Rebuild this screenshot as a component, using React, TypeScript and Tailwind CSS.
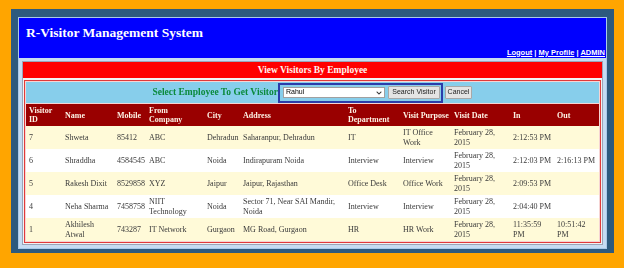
import { FaChevronDown } from "react-icons/fa";

const cols = [
  { label: "Visitor\nID", w: "w-[36px]" },
  { label: "Name", w: "w-[52px]" },
  { label: "Mobile", w: "w-[32px]" },
  { label: "From\nCompany", w: "w-[58px]" },
  { label: "City", w: "w-[36px]" },
  { label: "Address", w: "w-[105px]" },
  { label: "To\nDepartment", w: "w-[55px]" },
  { label: "Visit Purpose", w: "w-[51px]" },
  { label: "Visit Date", w: "w-[59px]" },
  { label: "In", w: "w-[44px]" },
  { label: "Out", w: "w-[45px]" },
];

const rows = [
  ["7", "Shweta", "85412", "ABC", "Dehradun", "Saharanpur, Dehradun", "IT", "IT Office\nWork", "February 28,\n2015", "2:12:53 PM", ""],
  ["6", "Shraddha", "4584545", "ABC", "Noida", "Indirapuram Noida", "Interview", "Interview", "February 28,\n2015", "2:12:03 PM", "2:16:13 PM"],
  ["5", "Rakesh Dixit", "8529858", "XYZ", "Jaipur", "Jaipur, Rajasthan", "Office Desk", "Office Work", "February 28,\n2015", "2:09:53 PM", ""],
  ["4", "Neha Sharma", "7458758", "NIIT\nTechnology", "Noida", "Sector 71, Near SAI Mandir,\nNoida", "Interview", "Interview", "February 28,\n2015", "2:04:40 PM", ""],
  ["1", "Akhilesh\nAtwal", "743287", "IT Network", "Gurgaon", "MG Road, Gurgaon", "HR", "HR Work", "February 28,\n2015", "11:35:59\nPM", "10:51:42\nPM"],
];

export default function App() {
  return (
    <div className="w-[624px] h-[268px] overflow-hidden bg-[#ffa500] pt-[9px] pl-[11px] font-['Liberation_Serif',serif]">
      <div className="w-[603px] bg-[#2d5a7e] pt-2 px-[7px] pb-[4px]">
        <div className="border border-[#a9c9ea] bg-[#c6dcf2]">
          {/* header */}
          <div className="h-[40px] bg-[#0000ff] flex flex-col justify-between pl-[7px] pr-px pt-[8px] pb-[2px]">
            <div className="text-white font-bold text-[13.5px] leading-none">
              R-Visitor Management System
            </div>
            <div className="self-end text-white font-bold text-[7.5px] leading-none font-['Liberation_Sans',sans-serif]">
              <span className="underline">Logout</span> |{" "}
              <span className="underline">My Profile</span> |{" "}
              <span className="underline">ADMIN</span>
            </div>
          </div>

          <div className="mx-[3px] mt-[3px] mb-[3px] border border-[#9aa4b8] bg-[#f2f2f2]">
            <div className="h-[16px] bg-[#ff0000] flex items-center justify-center text-[#fff4f0] font-bold text-[9.5px]">
              View Visitors By Employee
            </div>
            <div className="mt-[2px] mx-px mb-px border border-[#e03a3a] p-px bg-[#f6d4d4] will-change-transform">
              {/* search row */}
              <div className="h-[21px] bg-[#87ceeb] flex items-center mb-px">
                <div className="w-[252px] shrink-0 flex justify-end">
                  <span className="whitespace-nowrap text-[#0b8a3c] font-bold text-[9.5px] leading-none">
                    Select Employee To Get Visitor
                  </span>
                </div>
                <div className="h-[20px] w-[165px] border-2 border-[#2b3caa] flex items-center pl-[3px] gap-[3px] font-['Liberation_Sans',sans-serif]">
                  <div className="w-[102px] h-[11px] bg-white border border-[#a0a0a0] flex items-center justify-between px-[2px] text-[7px] text-black">
                    <span>Rahul</span>
                    <FaChevronDown className="text-[6px] text-[#333]" />
                  </div>
                  <div className="w-[52px] h-[13px] bg-[#e4e4e4] border border-[#a8a8a8] rounded-[1px] flex items-center justify-center text-[7px] text-[#222]">
                    Search Visitor
                  </div>
                </div>
                <div className="ml-[2px] w-[27px] h-[13px] bg-[#e4e4e4] border border-[#a8a8a8] rounded-[1px] flex items-center justify-center text-[7px] text-[#222] font-['Liberation_Sans',sans-serif]">
                  Cancel
                </div>
              </div>

              {/* table */}
              <table className="w-[573px] table-fixed border-collapse">
                <thead>
                  <tr className="h-[22px] bg-[#990000]">
                    {cols.map((c) => (
                      <th
                        key={c.label}
                        className={`${c.w} p-0 pl-[3px] text-left align-middle whitespace-pre-line text-[8px] leading-[9px] font-bold text-[#fdf1e4]`}
                      >
                        {c.label}
                      </th>
                    ))}
                  </tr>
                </thead>
                <tbody>
                  {rows.map((r, i) => (
                    <tr key={r[0]} className={`h-[23px] ${i % 2 === 0 ? "bg-[#fffad8]" : "bg-white"}`}>
                      {r.map((cell, j) => (
                        <td
                          key={j}
                          className="p-0 pl-[3px] align-middle whitespace-pre-line text-[8px] leading-[10px] text-[#3a3a3a]"
                        >
                          {cell}
                        </td>
                      ))}
                    </tr>
                  ))}
                </tbody>
              </table>
            </div>
          </div>
        </div>
      </div>
    </div>
  );
}
